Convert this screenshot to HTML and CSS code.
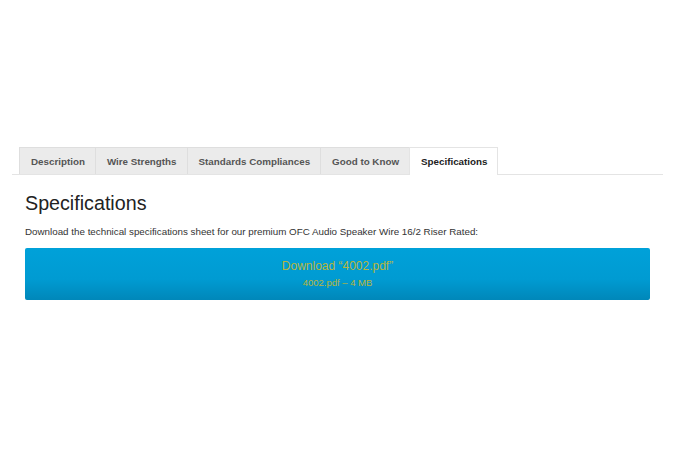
FILE: index.html
```html
<!DOCTYPE html>
<html lang="en">
<head>
    <meta charset="UTF-8">
    <meta name="viewport" content="width=device-width, initial-scale=1.0">
    <title>OFC Audio Speaker Wire 16/2 Riser Rated</title>
    <link rel="stylesheet" href="styles.css">
</head>
<body>
    <div class="product-tabs">
        <ul class="tabs">
            <li class="tab">Description</li>
            <li class="tab">Wire Strengths</li>
            <li class="tab">Standards Compliances</li>
            <li class="tab">Good to Know</li>
            <li class="tab active">Specifications</li>
        </ul>

        <div class="panel">
            <h2>Specifications</h2>
            <p>Download the technical specifications sheet for our premium OFC Audio Speaker Wire 16/2 Riser Rated:</p>

            <a class="download" href="#">
                <span class="download-title">Download &ldquo;4002.pdf&rdquo;</span>
                <span class="download-meta">4002.pdf &ndash; 4 MB</span>
            </a>
        </div>
    </div>
</body>
</html>
```

FILE: styles.css
```css
body {
    font-family: "Liberation Sans", Arial, sans-serif;
    margin: 0;
    padding: 0;
    background: #fff;
    color: #333;
}
.product-tabs {
    margin: 147px 12px 0;
}
.tabs {
    list-style: none;
    margin: 0;
    padding: 0 0 0 7px;
    display: flex;
    border-bottom: 1px solid #e4e4e4;
}
.tab {
    height: 26px;
    line-height: 27px;
    padding: 0 10px 0 11px;
    font-size: 9.8px;
    font-weight: bold;
    color: #555;
    background: #ebebeb;
    border: 1px solid #dedede;
    border-bottom: none;
    margin-right: -1px;
}
.tab.active {
    background: #fff;
    color: #222;
    border-color: #e4e4e4;
    margin-bottom: -1px;
    height: 27px;
}
.panel {
    padding: 0 13px;
}
.panel h2 {
    font-size: 19.7px;
    font-weight: normal;
    color: #222;
    margin: 15px 0 0;
    line-height: 26px;
}
.panel p {
    font-size: 9.8px;
    margin: 9px 0 0;
    line-height: 14px;
    color: #333;
}
.download {
    display: flex;
    flex-direction: column;
    align-items: center;
    justify-content: center;
    height: 52px;
    margin-top: 9px;
    border-radius: 2px;
    background: linear-gradient(to bottom, #00a1d9 0%, #009bd2 60%, #0087b9 100%);
    color: #b9b53c;
    text-decoration: none;
}
.download-title {
    font-size: 12px;
    line-height: 16px;
}
.download-meta {
    font-size: 9.5px;
    line-height: 14px;
    margin-top: 2px;
}
```
